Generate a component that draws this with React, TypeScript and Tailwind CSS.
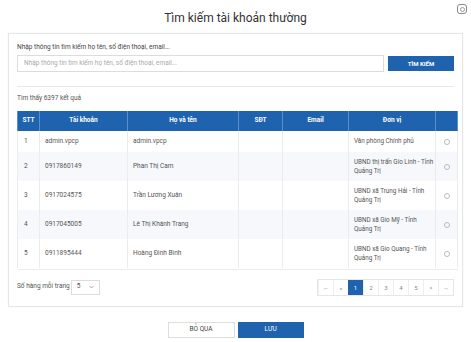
const rows = [
  { stt: 1, tk: "admin.vpcp", ten: "admin.vpcp", dv: "Văn phòng Chính phủ" },
  { stt: 2, tk: "0917860149", ten: "Phan Thị Cam", dv: "UBND thị trấn Gio Linh - Tỉnh Quảng Trị" },
  { stt: 3, tk: "0917024575", ten: "Trần Lương Xuân", dv: "UBND xã Trung Hải - Tỉnh Quảng Trị" },
  { stt: 4, tk: "0917045005", ten: "Lê Thị Khánh Trang", dv: "UBND xã Gio Mỹ - Tỉnh Quảng Trị" },
  { stt: 5, tk: "0911895444", ten: "Hoàng Đình Bình", dv: "UBND xã Gio Quang - Tỉnh Quảng Trị" },
];

const pages = ["←", "«", "1", "2", "3", "4", "5", "»", "→"];

function App() {
  return (
    <div className="relative w-[471px] h-[342px] bg-white text-[#444] font-['Roboto',sans-serif] overflow-hidden">
      <div className="absolute right-[4px] top-[4px] w-[10px] h-[10px] rounded-[3px] border border-[#888] flex items-center justify-center">
        <div className="w-[5px] h-[5px] rounded-full border border-[#999]" />
      </div>

      <div className="h-[33px] flex items-center justify-center pt-[2px]">
        <h1 className="text-[12px] text-[#333]">Tìm kiếm tài khoản thường</h1>
      </div>

      <div className="mx-[8px] border border-[#e6e6e6] px-[8px] pt-[9px] pb-[10px] shadow-[0_0_2px_rgba(0,0,0,0.05)]">
        <div className="text-[6.5px] leading-[8px] text-[#444]">
          Nhập thông tin tìm kiếm họ tên, số điện thoại, email...
        </div>
        <div className="mt-[4px] flex items-center gap-[4px]">
          <div className="flex-1 h-[17px] border border-[#dcdcdc] flex items-center px-[6px] text-[6.5px] text-[#aaa]">
            Nhập thông tin tìm kiếm họ tên, số điện thoại, email...
          </div>
          <button className="w-[66px] h-[15px] bg-[#1f62ae] text-white text-[6px] font-bold flex items-center justify-center">
            TÌM KIẾM
          </button>
        </div>

        <div className="mt-[14px] border-t border-[#e8e8e8]" />

        <div className="h-[24px] flex items-center text-[6.5px] text-[#555]">Tìm thấy 6397 kết quả</div>

        <table className="w-[440px] table-fixed border-collapse text-[6.5px]">
          <colgroup>
            <col className="w-[22px]" />
            <col className="w-[88px]" />
            <col className="w-[111px]" />
            <col className="w-[44px]" />
            <col className="w-[66px]" />
            <col className="w-[87px]" />
            <col className="w-[22px]" />
          </colgroup>
          <thead>
            <tr className="h-[20px] bg-[#1f62ae] text-white font-bold">
              {["STT", "Tài khoản", "Họ và tên", "SĐT", "Email", "Đơn vị", ""].map((h, i) => (
                <th key={i} className="border-x border-[#5b8fcc] text-center font-bold">
                  {h}
                </th>
              ))}
            </tr>
          </thead>
          <tbody>
            {rows.map((r, i) => (
              <tr
                key={r.stt}
                className={`${i === 0 ? "h-[21px]" : "h-[29px]"} ${i % 2 === 1 ? "bg-[#f6f8fb]" : "bg-white"} text-[#555]`}
              >
                <td className="border-x border-[#ececec] pl-[6px]">{r.stt}</td>
                <td className="border-x border-[#ececec] pl-[5px]">{r.tk}</td>
                <td className="border-x border-[#ececec] pl-[5px]">{r.ten}</td>
                <td className="border-x border-[#ececec]" />
                <td className="border-x border-[#ececec]" />
                <td className="border-x border-[#ececec] pl-[5px] pr-0 leading-[9px] text-[6.3px]">{r.dv}</td>
                <td className="border-x border-[#ececec]">
                  <div className="mx-auto w-[6px] h-[6px] rounded-full border border-[#bbb]" />
                </td>
              </tr>
            ))}
            <tr className="h-[1px]">
              <td colSpan={7} className="border-b border-[#ececec] p-0" />
            </tr>
          </tbody>
        </table>

        <div className="mt-[9px] flex items-center justify-between">
          <div className="flex items-center gap-[1px] text-[6.5px] text-[#555]">
            <span>Số hàng mỗi trang</span>
            <div className="w-[29px] h-[15px] border border-[#dcdcdc] flex items-center justify-between px-[5px]">
              <span>5</span>
              <svg width="5" height="4" viewBox="0 0 5 4">
                <path d="M0.5 1 L2.5 3 L4.5 1" fill="none" stroke="#888" strokeWidth="0.7" />
              </svg>
            </div>
          </div>
          <div className="flex border border-[#e6e6e6]">
            {pages.map((p, i) => (
              <div
                key={i}
                className={`w-[15px] h-[15px] flex items-center justify-center text-[6px] ${
                  p === "1" ? "bg-[#1f62ae] text-white" : "text-[#888] border-l border-[#eee]"
                }`}
              >
                {p}
              </div>
            ))}
          </div>
        </div>
      </div>

      <div className="mt-[15px] flex justify-center gap-[3px]">
        <button className="w-[67px] h-[16px] border border-[#ddd] bg-white text-[6.5px] text-[#444] flex items-center justify-center">
          BỎ QUA
        </button>
        <button className="w-[66px] h-[16px] bg-[#1f62ae] text-white text-[6.5px] flex items-center justify-center">
          LƯU
        </button>
      </div>
    </div>
  );
}

export default App;
